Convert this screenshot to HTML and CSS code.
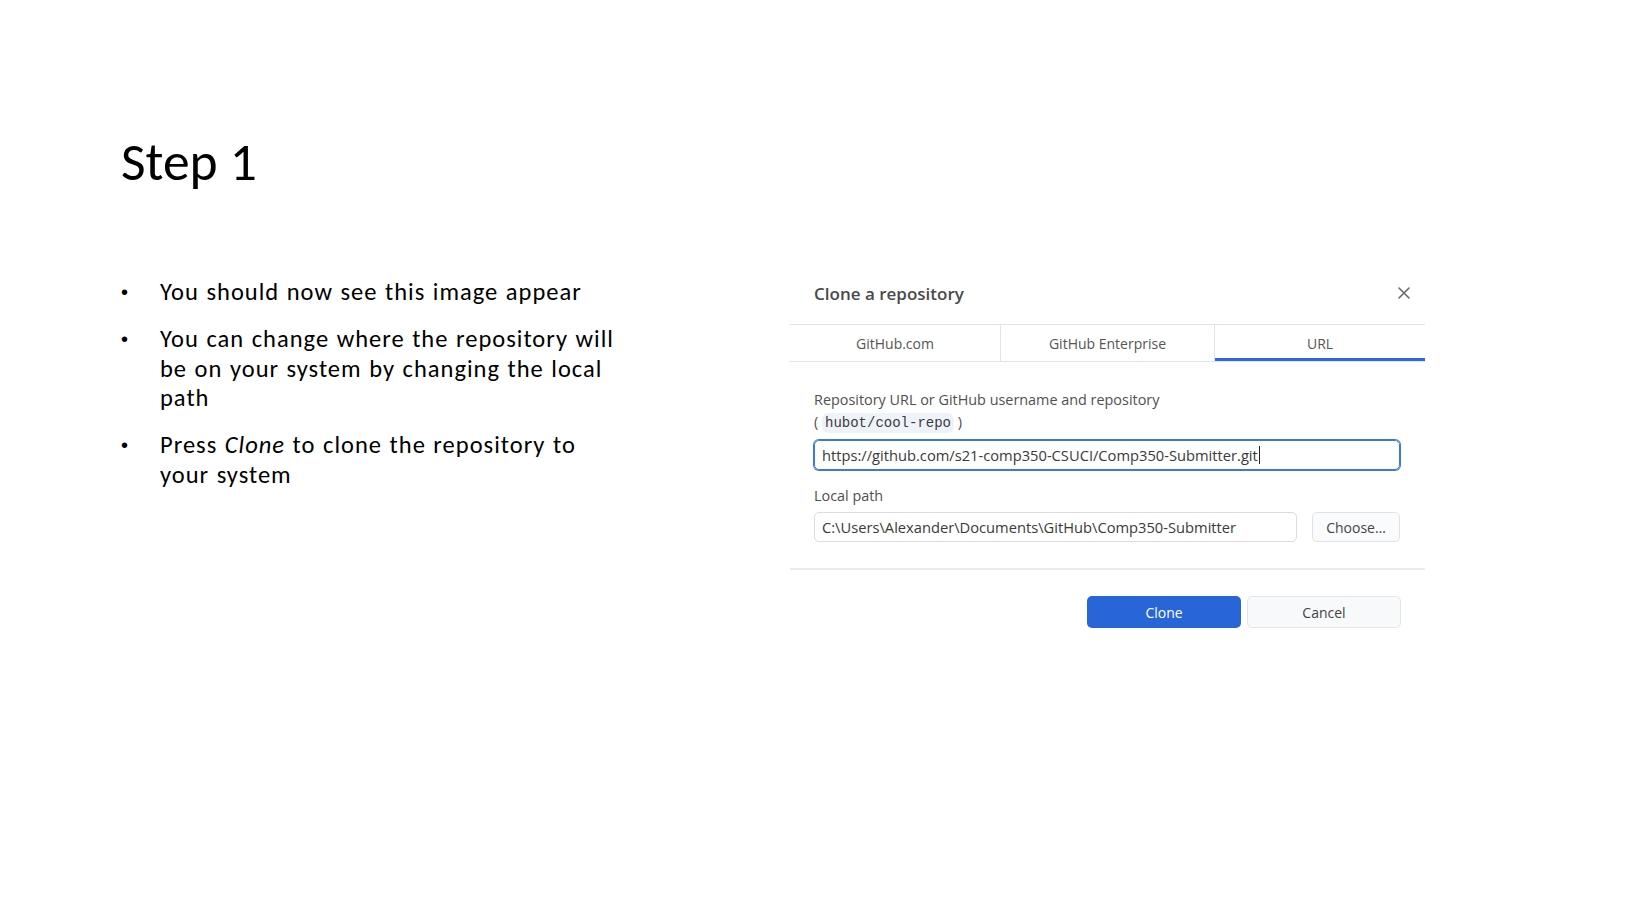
FILE: index.html
```html
<!DOCTYPE html>
<html>
<head>
<meta charset="utf-8">
<title>Step 1</title>
<link rel="stylesheet" href="styles.css">
</head>
<body>
<div class="slide">
  <h1 class="slide-title">Step 1</h1>
  <div class="content">
    <ul class="bullets">
      <li>You should now see this image appear</li>
      <li>You can change where the repository will<br>be on your system by changing the local<br>path</li>
      <li>Press <em>Clone</em> to clone the repository to<br>your system</li>
    </ul>
    <div class="dialog">
      <div class="dialog-header">
        <span class="dialog-title">Clone a repository</span>
        <svg class="close-icon" width="12" height="12" viewBox="0 0 12 12"><path d="M1 1L11 11M11 1L1 11" stroke="#6a6a6a" stroke-width="1.6" fill="none" stroke-linecap="round"/></svg>
      </div>
      <div class="tabs">
        <div class="tab">GitHub.com</div>
        <div class="tab">GitHub Enterprise</div>
        <div class="tab active">URL</div>
      </div>
      <div class="dialog-body">
        <div class="label">Repository URL or GitHub username and repository<br>( <code class="code">hubot/cool-repo</code> )</div>
        <div class="input focused"><span>https://github.com/s21-comp350-CSUCI/Comp350-Submitter.git</span><span class="caret"></span></div>
        <div class="label local-label">Local path</div>
        <div class="path-row">
          <div class="input path">C:\Users\Alexander\Documents\GitHub\Comp350-Submitter</div>
          <div class="btn choose">Choose…</div>
        </div>
      </div>
      <div class="dialog-footer">
        <div class="btn primary">Clone</div>
        <div class="btn cancel">Cancel</div>
      </div>
    </div>
  </div>
</div>
</body>
</html>
```

FILE: styles.css
```css
* { box-sizing: border-box; }
html, body { margin: 0; padding: 0; background: #ffffff; }
.slide {
  width: 1629px;
  height: 911px;
  padding: 122px 0 0 121px;
  font-family: "Carlito", "Lato", sans-serif;
  color: #000;
}
.slide-title {
  margin: 0;
  font-weight: 400;
  font-size: 53.5px;
  line-height: 80px;
  height: 80px;
}
.content {
  display: flex;
  align-items: flex-start;
  margin-top: 76px;
}
.bullets {
  list-style: none;
  margin: 0;
  padding: 0;
  width: 669px;
  font-size: 24.5px;
  line-height: 29.6px;
  letter-spacing: 1px;
  word-spacing: 1px;
}
.bullets li {
  position: relative;
  padding-left: 39px;
  margin-bottom: 17.5px;
}
.bullets li::before {
  content: "\2022";
  position: absolute;
  left: 0;
  top: 0;
  font-family: "Liberation Sans", sans-serif;
  font-size: 20px;
}
.bullets em { font-style: italic; }

.dialog {
  width: 635px;
  margin-top: 3px;
  font-family: "Segoe UI", "Open Sans", sans-serif;
  color: #4a4a4a;
}
.dialog-header {
  display: flex;
  align-items: center;
  justify-content: space-between;
  padding: 0 15px 0 24px;
  height: 24px;
}
.dialog-title {
  font-size: 17px;
  font-weight: 600;
  color: #4a4a4a;
}
.close-icon { display: block; }
.tabs {
  display: flex;
  margin-top: 19px;
  border-top: 1px solid #dfe4ec;
  border-bottom: 1px solid #dfe4ec;
  height: 38px;
}
.tab {
  flex: 1;
  display: flex;
  align-items: center;
  justify-content: center;
  font-size: 14px;
  color: #555;
}
.tab + .tab { border-left: 1px solid #dfe4ec; }
.tab:nth-child(2) { flex: 0 0 214px; }
.tab.active { box-shadow: inset 0 -3px 0 #2b6ad8; }
.dialog-body {
  padding: 27px 25px 26px 24px;
}
.label {
  font-size: 14.4px;
  line-height: 22px;
  color: #505050;
}
.code {
  font-family: "Liberation Mono", monospace;
  font-size: 14px;
  color: #3c3c3c;
  background: #eef3f9;
  border-radius: 6px;
  padding: 2px 3px;
}
.input {
  height: 30px;
  border: 1px solid #dcdcdc;
  border-radius: 5px;
  padding: 0 7px;
  display: flex;
  align-items: center;
  font-size: 14.7px;
  color: #3a3a3a;
  white-space: nowrap;
}
.input.focused {
  margin-top: 6px;
  border: 1px solid #3b79df;
  box-shadow: 0 0 0 1px #3b79df;
}
.caret {
  display: inline-block;
  width: 1px;
  height: 18px;
  background: #222;
  margin-left: 1px;
}
.local-label { margin-top: 15px; }
.path-row {
  display: flex;
  gap: 15px;
  margin-top: 5px;
}
.input.path { flex: 1; }
.btn {
  height: 30px;
  display: flex;
  align-items: center;
  justify-content: center;
  border-radius: 5px;
  font-size: 14px;
}
.choose {
  width: 88px;
  border: 1px solid #e0e2e6;
  background: #fafbfc;
  color: #444;
}
.dialog-footer {
  border-top: 2px solid #ebebee;
  display: flex;
  justify-content: flex-end;
  gap: 6px;
  padding: 26px 24px 0 0;
}
.dialog-footer .btn { width: 154px; height: 32px; }
.primary {
  background: #2866d8;
  color: #fff;
  font-weight: 500;
}
.cancel {
  background: #f8f9fb;
  border: 1px solid #e2e5ea;
  color: #444;
}
```
